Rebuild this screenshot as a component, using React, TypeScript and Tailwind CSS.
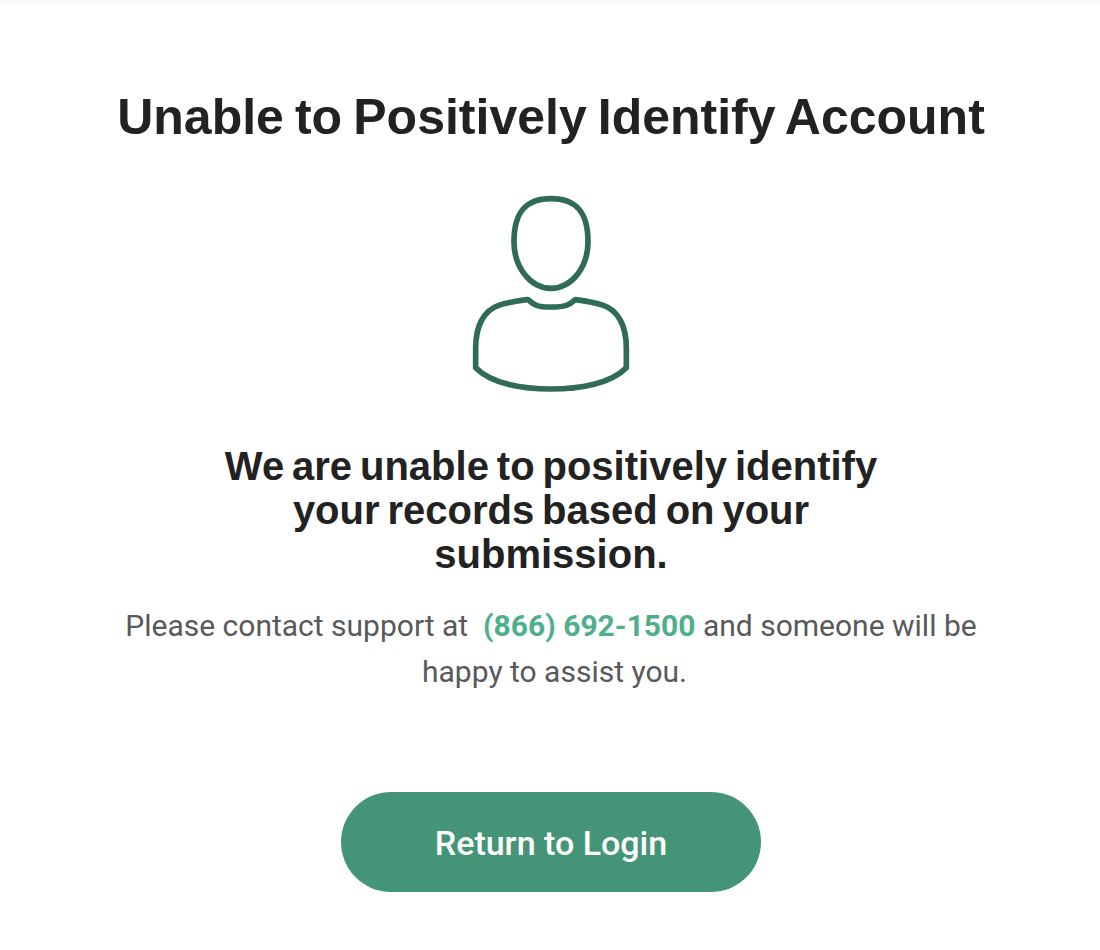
import React from 'react';

const PersonIcon: React.FC<{ className?: string }> = ({ className }) => (
  <svg
    viewBox="0 0 540 645"
    className={className}
    fill="none"
    stroke="#2f6b55"
    strokeWidth="17"
    strokeLinejoin="round"
  >
    <path d="M273 41C346 41 384 78 384 170C384 248 334 310 273 310C212 310 162 248 162 170C162 78 200 41 273 41Z" />
    <path d="M200 344C170 348 140 353 116 361C72 376 47 422 47 490V548C95 597 190 612 273 612C356 612 451 597 499 548V490C499 422 474 376 430 361C406 353 376 348 346 344C328 360 316 366 273 366C230 366 221 359 207 346Q205 343 200 344Z" />
  </svg>
);

interface SupportMessageProps {
  phone: string;
}

const SupportMessage: React.FC<SupportMessageProps> = ({ phone }) => (
  <p className="mt-[27px] whitespace-nowrap text-center font-['Roboto',sans-serif] text-[30px] leading-[46px] text-[#58595b]">
    Please contact support at&nbsp;{' '}
    <a href="tel:8666921500" className="font-bold text-[#4fae8b]">
      {phone}
    </a>{' '}
    and someone will be
    <br />
    <span className="pl-[7px]">happy to assist you.</span>
  </p>
);

export default function App() {
  return (
    <div className="flex h-[950px] flex-col overflow-hidden bg-white">
      {/* Shadow left by the header above */}
      <div className="h-2 w-full shrink-0 bg-linear-to-b from-[#f7f7f7] to-white" />

      <main className="flex flex-col items-center pl-[2px]">
        <h1 className="mt-[79px] whitespace-nowrap font-['Liberation_Sans',sans-serif] text-[50px] font-bold leading-[60px] text-[#222222] [word-spacing:-2.8px]">
          Unable to Positively Identify Account
        </h1>

        <PersonIcon className="mr-[2px] mt-[38px] h-[215px] w-[180px]" />

        <h2 className="mt-[44px] text-center font-['Liberation_Sans',sans-serif] text-[40px] font-bold leading-[44px] text-[#222222] [word-spacing:-3.2px]">
          We are unable to positively identify
          <br />
          your records based on your
          <br />
          submission.
        </h2>

        <SupportMessage phone="(866) 692-1500" />

        <button className="mt-[97px] h-[100px] w-[420px] rounded-full bg-[#449578] pt-[3px] font-['Roboto',sans-serif] text-[34px] font-medium text-white">
          Return to Login
        </button>
      </main>
    </div>
  );
}
